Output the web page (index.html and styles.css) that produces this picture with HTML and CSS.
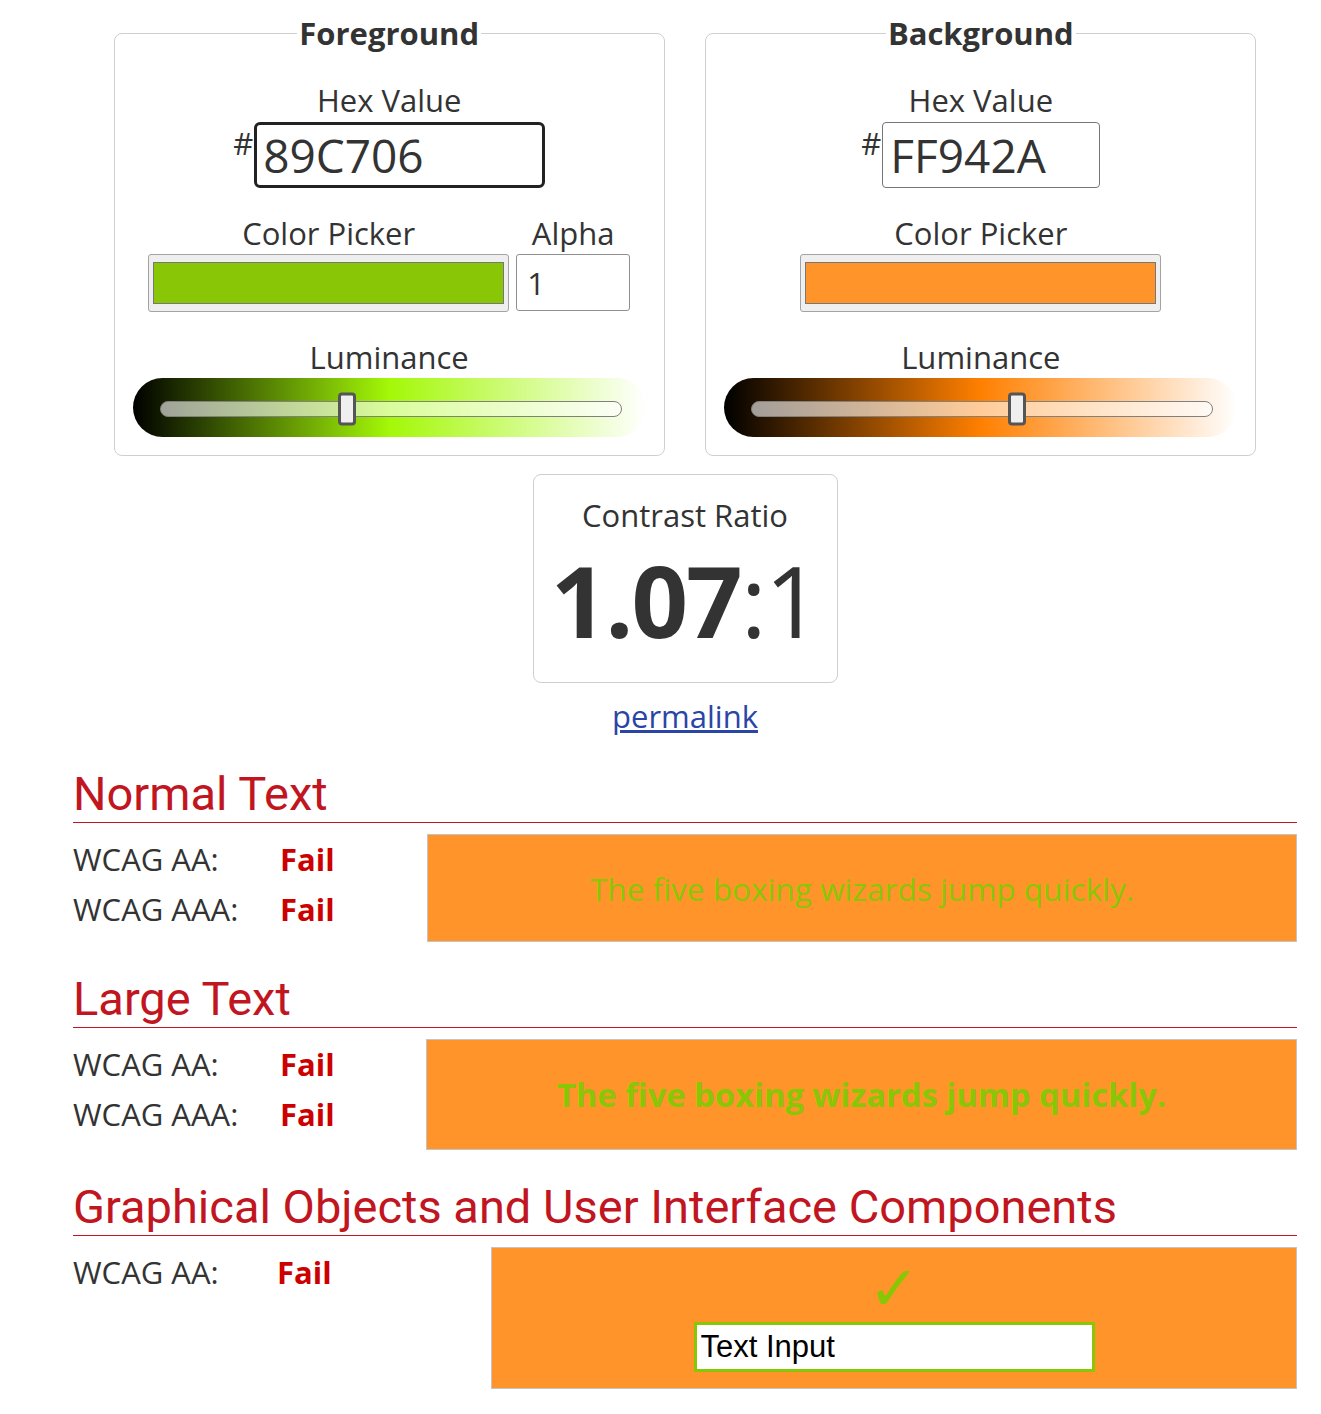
FILE: index.html
```html
<!DOCTYPE html>
<html lang="en">
<head>
<meta charset="utf-8">
<title>Contrast Checker</title>
<link rel="stylesheet" href="styles.css">
</head>
<body>
<main class="page">
  <div class="panels">
    <fieldset class="panel">
      <legend>Foreground</legend>
      <div class="label hex-label">Hex Value</div>
      <div class="hex-row">
        <span class="hash">#</span>
        <input class="hex-input hex-input--focus" type="text" value="89C706" aria-label="Foreground hex value">
      </div>
      <div class="picker-row">
        <div class="picker-col picker-col--fg">
          <div class="label">Color Picker</div>
          <div class="swatch"><div class="swatch-fill swatch-fill--fg"></div></div>
        </div>
        <div class="picker-col picker-col--alpha">
          <div class="label">Alpha</div>
          <input class="alpha-input" type="text" value="1" aria-label="Alpha">
        </div>
      </div>
      <div class="label lum-label">Luminance</div>
      <div class="slider slider--fg">
        <div class="track"><div class="thumb" style="left: 40.5%"></div></div>
      </div>
    </fieldset>

    <fieldset class="panel">
      <legend>Background</legend>
      <div class="label hex-label">Hex Value</div>
      <div class="hex-row">
        <span class="hash">#</span>
        <input class="hex-input hex-input--plain" type="text" value="FF942A" aria-label="Background hex value">
      </div>
      <div class="picker-row">
        <div class="picker-col picker-col--bg">
          <div class="label">Color Picker</div>
          <div class="swatch"><div class="swatch-fill swatch-fill--bg"></div></div>
        </div>
      </div>
      <div class="label lum-label">Luminance</div>
      <div class="slider slider--bg">
        <div class="track"><div class="thumb" style="left: 57.6%"></div></div>
      </div>
    </fieldset>
  </div>

  <div class="ratio-box">
    <div class="label">Contrast Ratio</div>
    <div class="ratio"><b>1.07</b>:1</div>
  </div>
  <div class="permalink-wrap"><a class="permalink" href="#">permalink</a></div>

  <section class="result">
    <h2 class="result-title">Normal Text</h2>
    <div class="result-body">
      <div class="checks checks--a">
        <div class="check-row"><span class="check-label">WCAG AA:</span><span class="fail">Fail</span></div>
        <div class="check-row"><span class="check-label">WCAG AAA:</span><span class="fail">Fail</span></div>
      </div>
      <div class="sample sample--normal">The five boxing wizards jump quickly.</div>
    </div>
  </section>

  <section class="result">
    <h2 class="result-title">Large Text</h2>
    <div class="result-body">
      <div class="checks checks--b">
        <div class="check-row"><span class="check-label">WCAG AA:</span><span class="fail">Fail</span></div>
        <div class="check-row"><span class="check-label">WCAG AAA:</span><span class="fail">Fail</span></div>
      </div>
      <div class="sample sample--large">The five boxing wizards jump quickly.</div>
    </div>
  </section>

  <section class="result">
    <h2 class="result-title">Graphical Objects and User Interface Components</h2>
    <div class="result-body">
      <div class="checks checks--c">
        <div class="check-row"><span class="check-label check-label--c">WCAG AA:</span><span class="fail">Fail</span></div>
      </div>
      <div class="sample sample--ui">
        <div class="checkmark">&#10003;</div>
        <input class="demo-input" type="text" value="Text Input" aria-label="Text Input">
      </div>
    </div>
  </section>
</main>
</body>
</html>
```

FILE: styles.css
```css
* { box-sizing: border-box; }

body {
  margin: 0;
  background: #fff;
  color: #333;
  font-family: "Open Sans", "DejaVu Sans", sans-serif;
  font-size: 31px;
}

.page {
  width: 1224px;
  margin-left: 73px;
  padding: 12px 0 20px;
}

/* ---------- colour panels ---------- */
.panels {
  display: flex;
  justify-content: space-evenly;
}

.panel {
  width: 551px;
  min-width: 0;
  margin: 0;
  padding: 0 0 18px;
  border: 1px solid #cfcfcf;
  border-radius: 8px;
  text-align: center;
}

.panel legend {
  margin: 0 auto;
  padding: 0 2px;
  font-weight: 700;
  font-size: 31px;
  line-height: 42px;
}

.label { line-height: 42px; }

.hex-label { margin-top: 25px; }

.hex-row {
  display: flex;
  justify-content: center;
  align-items: flex-start;
  gap: 1px;
  margin-top: 1px;
}

.hash {
  line-height: 42px;
  font-size: 31px;
}

.hex-input {
  height: 66px;
  margin: 0;
  font-family: "Open Sans", sans-serif;
  font-size: 46px;
  color: #333;
  background: #fff;
}

.hex-input--focus {
  width: 291px;
  padding: 0 6px;
  border: 3px solid #222;
  border-radius: 6px;
  outline: none;
}

.hex-input--plain {
  width: 218px;
  padding: 0 7px;
  border: 1px solid #767676;
  border-radius: 4px;
}

.picker-row {
  display: flex;
  justify-content: center;
  gap: 7px;
  margin-top: 24px;
}

.picker-col--fg,
.picker-col--bg { width: 361px; }
.picker-col--alpha { width: 114px; }

.swatch {
  height: 58px;
  padding: 7px 4px;
  background: #efefef;
  border: 1px solid #a3a3a3;
  border-radius: 3px;
}

.swatch-fill {
  height: 100%;
  border: 1px solid #777;
}
.swatch-fill--fg { background: #89c706; }
.swatch-fill--bg { background: #ff942a; }

.alpha-input {
  display: block;
  width: 114px;
  height: 57px;
  margin: 0;
  padding: 0 10px;
  border: 1px solid #8f8f8f;
  border-radius: 3px;
  font-family: "Open Sans", sans-serif;
  font-size: 31px;
  color: #333;
  background: #fff;
}

.lum-label { margin-top: 24px; }

.slider {
  display: flex;
  align-items: center;
  width: 513px;
  height: 59px;
  margin: 0 auto;
  padding: 3px 24px 0 27px;
  border-radius: 30px;
}
.slider--fg {
  background: linear-gradient(to right, hsl(81, 94.5%, 0%), hsl(81, 94.5%, 50%), hsl(81, 94.5%, 100%));
}
.slider--bg {
  background: linear-gradient(to right, hsl(30, 100%, 0%), hsl(30, 100%, 50%), hsl(30, 100%, 100%));
}

.track {
  position: relative;
  flex: 1;
  height: 16px;
  border: 1px solid #808080;
  border-radius: 8px;
  background: rgba(255, 255, 255, 0.6);
}

.thumb {
  position: absolute;
  top: 50%;
  width: 18px;
  height: 33px;
  transform: translate(-50%, -50%);
  background: #efefef;
  border: 3px solid #555;
  border-radius: 4px;
}

/* ---------- ratio ---------- */
.ratio-box {
  width: 305px;
  margin: 18px auto 0;
  padding: 19px 0 18px;
  border: 1px solid #cfcfcf;
  border-radius: 8px;
  text-align: center;
}

.ratio {
  font-size: 99px;
  line-height: 128px;
  letter-spacing: -2px;
  font-weight: 400;
}
.ratio b { font-weight: 700; }

.permalink-wrap {
  margin-top: 12px;
  text-align: center;
  line-height: 42px;
}
.permalink { color: #2a45a5; }

/* ---------- results ---------- */
.result-title {
  margin: 29px 0 0;
  font-family: Roboto, "Liberation Sans", sans-serif;
  font-weight: 400;
  font-size: 47px;
  line-height: 56px;
  color: #c1161f;
  border-bottom: 1px solid #c1161f;
}

.result-body {
  display: flex;
  align-items: flex-start;
  margin-top: 11px;
}

.checks--a { width: 354px; }
.checks--b { width: 353px; }
.checks--c { width: 418px; }

.check-row {
  display: flex;
  line-height: 50px;
}

.check-label { width: 207px; }
.check-label--c { width: 204px; }

.fail {
  color: #c00;
  font-weight: 700;
}

.sample {
  flex: 1;
  display: flex;
  align-items: center;
  justify-content: center;
  background: #ff942a;
  border: 1px solid #c4c4c4;
  color: #89c706;
}

.sample--normal {
  height: 108px;
  font-size: 31.5px;
}

.sample--large {
  height: 111px;
  font-size: 32.7px;
  font-weight: 700;
}

.sample--ui {
  flex-direction: column;
  justify-content: flex-start;
  height: 142px;
  padding-top: 14px;
}

.checkmark {
  font-family: "DejaVu Sans", sans-serif;
  font-size: 62px;
  line-height: 54px;
  color: #89c706;
}

.demo-input {
  width: 401px;
  height: 50px;
  margin: 6px 0 0;
  padding: 0 4px;
  border: 3px solid #89c706;
  background: #fff;
  color: #000;
  font-family: "Liberation Sans", Arial, sans-serif;
  font-size: 31px;
}
```
